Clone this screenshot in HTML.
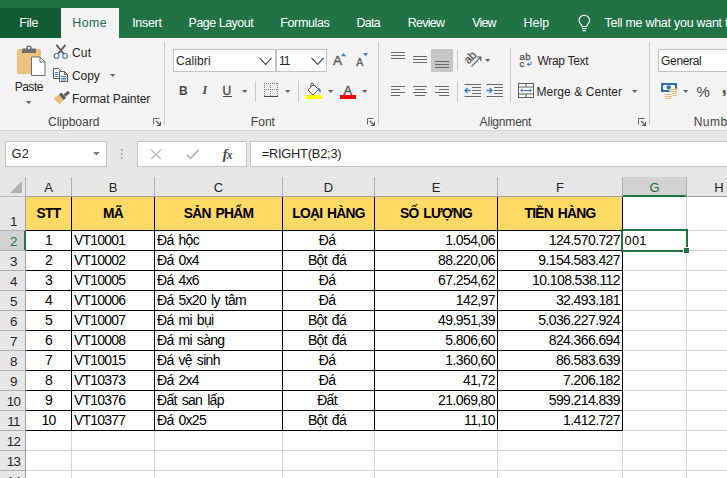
<!DOCTYPE html>
<html lang="vi"><head><meta charset="utf-8"><title>Excel</title>
<style>
html,body{margin:0;padding:0;}
body{width:727px;height:478px;overflow:hidden;position:relative;background:#e6e6e6;font-family:"Liberation Sans",sans-serif;font-size:12px;color:#262626;}
.a{position:absolute;white-space:nowrap;}
.tab{position:absolute;top:15px;color:#fff;font-size:12.5px;line-height:15px;white-space:nowrap;}
.rt{position:absolute;white-space:nowrap;font-size:12.5px;line-height:15px;color:#262626;}
.gl{position:absolute;white-space:nowrap;font-size:12px;line-height:15px;color:#444;}
.sep{position:absolute;width:1px;background:#c8c8c8;}
.ch{position:absolute;top:177px;height:19px;line-height:21px;text-align:center;font-size:13px;color:#262626;}
.rh{position:absolute;left:1px;width:25px;text-align:center;font-size:13.4px;color:#262626;line-height:16px;letter-spacing:-0.6px;}
.c{position:absolute;white-space:nowrap;font-size:14px;line-height:15px;color:#000;letter-spacing:-0.8px;}
.cn{letter-spacing:-0.6px;}
.ct{letter-spacing:-0.7px;word-spacing:1.8px;}
.hc{position:absolute;white-space:nowrap;font-size:13.8px;line-height:15px;color:#000;font-weight:bold;text-align:center;letter-spacing:-0.7px;word-spacing:1.5px;}
.vl{position:absolute;width:1px;}
.hl{position:absolute;height:1px;}
svg{position:absolute;overflow:visible;}
</style></head><body>

<div class="a" style="left:0;top:0;width:727px;height:38px;background:#217346"></div>
<div class="a" style="left:0;top:8px;width:61px;height:30px;background:#115c33"></div>
<div class="a" style="left:61px;top:8px;width:58px;height:30px;background:#f3f3f3"></div>
<div class="a" style="left:19.21px;top:16.50px;font-size:12.4px;line-height:12.4px;letter-spacing:-0.23px;color:#fff;">File</div>
<div class="a" style="left:72.31px;top:16.50px;font-size:12.4px;line-height:12.4px;letter-spacing:0.4px;color:#217346;">Home</div>
<div class="a" style="left:132.18px;top:16.50px;font-size:12.4px;line-height:12.4px;letter-spacing:-0.25px;color:#fff;">Insert</div>
<div class="a" style="left:188.61px;top:16.50px;font-size:12.4px;line-height:12.4px;letter-spacing:-0.45px;color:#fff;">Page Layout</div>
<div class="a" style="left:280.31px;top:16.50px;font-size:12.4px;line-height:12.4px;letter-spacing:-0.32px;color:#fff;">Formulas</div>
<div class="a" style="left:356.51px;top:16.50px;font-size:12.4px;line-height:12.4px;letter-spacing:-0.67px;color:#fff;">Data</div>
<div class="a" style="left:407.71px;top:16.50px;font-size:12.4px;line-height:12.4px;letter-spacing:-0.7px;color:#fff;">Review</div>
<div class="a" style="left:472.2px;top:16.50px;font-size:12.4px;line-height:12.4px;letter-spacing:-0.76px;color:#fff;">View</div>
<div class="a" style="left:523.61px;top:16.50px;font-size:12.4px;line-height:12.4px;letter-spacing:0.05px;color:#fff;">Help</div>
<div class="a" style="left:604.55px;top:16.50px;font-size:12.4px;line-height:12.4px;letter-spacing:-0.22px;color:#fff;">Tell me what you want to do</div>
<svg style="left:578px;top:15px" width="13" height="17" viewBox="0 0 13 17"><path d="M4 11.5C4 9.5 1 8.5 1 5.5A5.3 5.3 0 0 1 11.6 5.5C11.6 8.5 8.6 9.5 8.6 11.5Z" fill="none" stroke="#fff" stroke-width="1.1"/><path d="M4 13.5H8.6M4.6 15.6H8" stroke="#fff" stroke-width="1.1" fill="none"/></svg>
<div class="a" style="left:0;top:38px;width:727px;height:92px;background:#f3f3f3"></div>
<div class="a" style="left:0;top:130px;width:727px;height:1px;background:#d6d6d6"></div>
<div class="a" style="left:14.64px;top:81.04px;font-size:12px;line-height:12px;letter-spacing:-0.47px;color:#262626;">Paste</div>
<svg style="left:26px;top:101px" width="6" height="4" viewBox="0 0 6 4"><path d="M0 0H5.4L2.7 3Z" fill="#666"/></svg>
<div class="a" style="left:71.9px;top:47.14px;font-size:12px;line-height:12px;letter-spacing:0.25px;color:#262626;">Cut</div>
<div class="a" style="left:71.9px;top:69.74px;font-size:12px;line-height:12px;letter-spacing:-0.02px;color:#262626;">Copy</div>
<svg style="left:110px;top:74px" width="6" height="4" viewBox="0 0 6 4"><path d="M0 0H5.4L2.7 3Z" fill="#666"/></svg>
<div class="a" style="left:71.94px;top:92.54px;font-size:12px;line-height:12px;letter-spacing:-0.08px;color:#262626;">Format Painter</div>
<div class="a" style="left:48.0px;top:115.84px;font-size:12px;line-height:12px;letter-spacing:-0.0px;color:#444;">Clipboard</div>
<svg style="left:153px;top:118px" width="8" height="8" viewBox="0 0 8 8"><path d="M0.5 6.5V0.5H6.5" fill="none" stroke="#666" stroke-width="1"/><path d="M3 3L7 7" stroke="#555" stroke-width="1.1" fill="none"/><path d="M7.5 4V7.5H4" fill="none" stroke="#555" stroke-width="1"/></svg>
<div class="a" style="left:250.84px;top:115.84px;font-size:12px;line-height:12px;letter-spacing:0.03px;color:#444;">Font</div>
<svg style="left:367px;top:118px" width="8" height="8" viewBox="0 0 8 8"><path d="M0.5 6.5V0.5H6.5" fill="none" stroke="#666" stroke-width="1"/><path d="M3 3L7 7" stroke="#555" stroke-width="1.1" fill="none"/><path d="M7.5 4V7.5H4" fill="none" stroke="#555" stroke-width="1"/></svg>
<div class="a" style="left:479.6px;top:115.84px;font-size:12px;line-height:12px;letter-spacing:-0.19px;color:#444;">Alignment</div>
<svg style="left:638px;top:118px" width="8" height="8" viewBox="0 0 8 8"><path d="M0.5 6.5V0.5H6.5" fill="none" stroke="#666" stroke-width="1"/><path d="M3 3L7 7" stroke="#555" stroke-width="1.1" fill="none"/><path d="M7.5 4V7.5H4" fill="none" stroke="#555" stroke-width="1"/></svg>
<div class="a" style="left:693.64px;top:115.84px;font-size:12px;line-height:12px;letter-spacing:0.5px;color:#444;">Number</div>
<div class="sep" style="left:164px;top:42px;height:83px"></div>
<div class="sep" style="left:378px;top:42px;height:83px"></div>
<div class="sep" style="left:649px;top:42px;height:83px"></div>
<div class="sep" style="left:255px;top:81px;height:21px"></div>
<div class="sep" style="left:298px;top:81px;height:21px"></div>
<div class="sep" style="left:457px;top:50px;height:21px"></div>
<div class="sep" style="left:457px;top:81px;height:21px"></div>
<div class="sep" style="left:510px;top:48px;height:55px"></div>
<svg style="left:16px;top:45px" width="31" height="32" viewBox="0 0 31 32">
<rect x="1" y="4" width="24" height="25" rx="2" fill="#ecc27e"/>
<path d="M6 8V4.5Q6 3.5 7 3.5H10.5V2Q10.5 0.8 11.7 0.8H14.3Q15.5 0.8 15.5 2V3.5H19Q20 3.5 20 4.5V8Z" fill="#6e6e6e"/>
<rect x="12" y="2" width="2" height="2" fill="#f3f3f3"/>
<path d="M15.5 12H24L29 17V30.5H15.5Z" fill="#fff" stroke="#6e6e6e" stroke-width="1"/>
<path d="M24 12V17H29" fill="none" stroke="#6e6e6e" stroke-width="1"/>
</svg>
<svg style="left:53px;top:44px" width="16" height="16" viewBox="0 0 16 16">
<path d="M3.4 0.8L10.8 10M12.4 0.8L5 10" stroke="#606060" stroke-width="1.9" fill="none"/>
<circle cx="3.6" cy="11.9" r="2.4" fill="#f3f3f3" stroke="#3c7ac6" stroke-width="1.1"/>
<circle cx="12.1" cy="11.9" r="2.4" fill="#f3f3f3" stroke="#3c7ac6" stroke-width="1.1"/>
</svg>
<svg style="left:52px;top:67px" width="17" height="16" viewBox="0 0 17 16">
<path d="M1.5 1.5H6.5L9.5 4.5V11.5H1.5Z" fill="#fff" stroke="#5c5c5c" stroke-width="1"/>
<path d="M3 5.5H6M3 7.5H6M3 9.5H6" stroke="#3c7ac6" stroke-width="1"/>
<path d="M7.5 4.5H12.5L15.5 7.5V14.5H7.5Z" fill="#fff" stroke="#5c5c5c" stroke-width="1"/>
<path d="M12.5 4.5V7.5H15.5" fill="none" stroke="#5c5c5c" stroke-width="1"/>
<path d="M9 9.5H14M9 11.5H14M9 13H14" stroke="#3c7ac6" stroke-width="1"/>
</svg>
<svg style="left:53px;top:90px" width="18" height="15" viewBox="0 0 18 15">
<path d="M0.5 8.5L6 4.5L10.5 10L6.5 14.5Z" fill="#ecbd75"/>
<path d="M6 4.5L8.5 2.5L13 8L10.5 10Z" fill="#5c5c5c"/>
<path d="M10.5 4.5L15 0.8L17 3L12.5 6.8Z" fill="#5c5c5c"/>
</svg>
<div class="a" style="left:173px;top:49px;width:103px;height:23px;background:#fff;border:1px solid #c3c3c3;box-sizing:border-box"></div>
<div class="a" style="left:276px;top:49px;width:51px;height:23px;background:#fff;border:1px solid #c3c3c3;box-sizing:border-box"></div>
<div class="a" style="left:175.9px;top:54.74px;font-size:12px;line-height:12px;letter-spacing:0.11px;color:#262626;">Calibri</div>
<div class="a" style="left:278.96px;top:54.74px;font-size:12px;line-height:12px;letter-spacing:-1.04px;color:#262626;">11</div>
<svg style="left:259.4px;top:57px" width="14" height="9" viewBox="0 0 14 9"><path d="M0.5 0.8L6.6 7.4L12.7 0.8" fill="none" stroke="#444" stroke-width="1.1"/></svg>
<svg style="left:310.5px;top:57px" width="14" height="9" viewBox="0 0 14 9"><path d="M0.5 0.8L6.6 7.4L12.7 0.8" fill="none" stroke="#444" stroke-width="1.1"/></svg>
<div class="a" style="left:333.1px;top:54.37px;font-size:13.5px;line-height:13.5px;letter-spacing:0px;color:#5a5a5a;-webkit-text-stroke:0.35px #5a5a5a">A</div>
<svg style="left:341px;top:52.5px" width="6" height="4" viewBox="0 0 6 4"><path d="M0 3.2H5L2.5 0Z" fill="#3c7ac6"/></svg>
<div class="a" style="left:356.3px;top:56.91px;font-size:10.5px;line-height:10.5px;letter-spacing:0px;color:#5a5a5a;-webkit-text-stroke:0.3px #5a5a5a">A</div>
<svg style="left:363px;top:52.5px" width="6" height="4" viewBox="0 0 6 4"><path d="M0 0H5L2.5 3.2Z" fill="#3c7ac6"/></svg>
<div class="a" style="left:178.98px;top:84.64px;font-size:12px;line-height:12px;letter-spacing:0px;color:#4a4a4a;font-weight:bold">B</div>
<div class="a" style="left:202.2px;top:83.4px;font-size:13px;line-height:14px;color:#4a4a4a;font-family:'Liberation Serif',serif;font-style:italic;font-weight:bold">I</div>
<div class="a" style="left:222.56px;top:84.54px;font-size:12px;line-height:12px;letter-spacing:0px;color:#4a4a4a;-webkit-text-stroke:0.35px #4a4a4a">U</div>
<div class="a" style="left:223px;top:96px;width:9px;height:1px;background:#4a4a4a"></div>
<svg style="left:242px;top:90px" width="6" height="4" viewBox="0 0 6 4"><path d="M0 0H5.4L2.7 3Z" fill="#666"/></svg>
<svg style="left:264px;top:83px" width="14" height="14" viewBox="0 0 14 14">
<path d="M0 0.5H14M0 6.5H14" stroke="#7a7a7a" stroke-width="1" stroke-dasharray="1 1" fill="none"/>
<path d="M0.5 0V13M6.5 0V13M13.5 0V13" stroke="#7a7a7a" stroke-width="1" stroke-dasharray="1 1" fill="none"/>
<path d="M0 13.5H14" stroke="#444" stroke-width="1"/>
</svg>
<svg style="left:285px;top:90px" width="6" height="4" viewBox="0 0 6 4"><path d="M0 0H5.4L2.7 3Z" fill="#666"/></svg>
<svg style="left:305px;top:82px" width="18" height="17" viewBox="0 0 18 17">
<path d="M3 8L8.5 2.5L13.5 7.5L8 13Z" fill="#fff" stroke="#555" stroke-width="1"/>
<path d="M6 5V2.2Q6 1 7.2 1Q8.4 1 8.4 2.2V4" fill="none" stroke="#555" stroke-width="1"/>
<path d="M13.5 5.5Q16.5 7 15.5 11Q14 9 13 8.5Z" fill="#3c7ac6"/>
<rect x="0.8" y="13" width="16.4" height="4" fill="#ffff00"/>
</svg>
<svg style="left:328px;top:90px" width="6" height="4" viewBox="0 0 6 4"><path d="M0 0H5.4L2.7 3Z" fill="#666"/></svg>
<div class="a" style="left:343.5px;top:83.60px;font-size:13px;line-height:13px;letter-spacing:0px;color:#5a5a5a;-webkit-text-stroke:0.45px #5a5a5a">A</div>
<div class="a" style="left:340px;top:95px;width:16px;height:4px;background:#ff0000"></div>
<svg style="left:362px;top:90px" width="6" height="4" viewBox="0 0 6 4"><path d="M0 0H5.4L2.7 3Z" fill="#666"/></svg>
<div class="a" style="left:431px;top:49px;width:22px;height:23px;background:#c6c6c6"></div>
<svg style="left:0;top:0" width="1" height="1"><path d="M391 52.5H405M391 55.5H405M391 58.5H405" stroke="#6a6a6a" stroke-width="1" fill="none"/></svg>
<svg style="left:0;top:0" width="1" height="1"><path d="M413 56.5H427M413 59.5H427M413 62.5H427" stroke="#6a6a6a" stroke-width="1" fill="none"/></svg>
<svg style="left:0;top:0" width="1" height="1"><path d="M435 61.5H449M435 64.5H449M435 67.5H449" stroke="#6a6a6a" stroke-width="1" fill="none"/></svg>
<svg style="left:0;top:0" width="1" height="1"><path d="M391 86.5H405M391 89.5H400M391 92.5H405M391 95.5H400" stroke="#6a6a6a" stroke-width="1" fill="none"/></svg>
<svg style="left:0;top:0" width="1" height="1"><path d="M413.0 86.5H427.0M415.0 89.5H425.0M413.0 92.5H427.0M415.0 95.5H425.0" stroke="#6a6a6a" stroke-width="1" fill="none"/></svg>
<svg style="left:0;top:0" width="1" height="1"><path d="M435 86.5H449M439 89.5H449M435 92.5H449M439 95.5H449" stroke="#6a6a6a" stroke-width="1" fill="none"/></svg>
<svg style="left:463px;top:50px" width="20" height="18" viewBox="0 0 20 18">
<text transform="translate(5.5 14.4) rotate(-45)" font-family="Liberation Sans, sans-serif" font-size="11.5" fill="#555" stroke="#555" stroke-width="0.25" letter-spacing="-0.4">ab</text>
<path d="M8.6 16.4L17.6 7.2" stroke="#555" stroke-width="1.1" fill="none"/>
<path d="M13.6 7H17.8V11.2" stroke="#555" stroke-width="1.1" fill="none"/>
</svg>
<svg style="left:485px;top:59px" width="6" height="4" viewBox="0 0 6 4"><path d="M0 0H5.4L2.7 3Z" fill="#666"/></svg>
<svg style="left:464px;top:83px" width="18" height="15" viewBox="0 0 18 15">
<path d="M0.5 1.5H17M8 4.5H17M8 7.5H17M8 10.5H17M0.5 13.5H17" stroke="#6a6a6a" stroke-width="1" fill="none"/>
<path d="M1 7.5H6.5M3.5 5L1 7.5L3.5 10" stroke="#3c7ac6" stroke-width="1.4" fill="none"/>
</svg>
<svg style="left:486px;top:83px" width="18" height="15" viewBox="0 0 18 15">
<path d="M0.5 1.5H17M8 4.5H17M8 7.5H17M8 10.5H17M0.5 13.5H17" stroke="#6a6a6a" stroke-width="1" fill="none"/>
<path d="M0.5 7.5H6M3.5 5L6 7.5L3.5 10" stroke="#3c7ac6" stroke-width="1.4" fill="none"/>
</svg>
<svg style="left:519px;top:52px" width="14" height="16" viewBox="0 0 14 16">
<text x="0.6" y="7.8" font-family="Liberation Sans, sans-serif" font-size="9.6" fill="#555" stroke="#555" stroke-width="0.3" letter-spacing="0.2">ab</text>
<text x="0.6" y="14.6" font-family="Liberation Sans, sans-serif" font-size="9.6" fill="#555" stroke="#555" stroke-width="0.3">c</text>
<path d="M12 9.5V12.4H8.5M10 10.8L8.3 12.4L10 14" stroke="#3c7ac6" stroke-width="1" fill="none"/>
</svg>
<div class="a" style="left:537.4px;top:54.64px;font-size:12px;line-height:12px;letter-spacing:-0.29px;color:#262626;">Wrap Text</div>
<svg style="left:518px;top:83px" width="16" height="15" viewBox="0 0 16 15">
<rect x="0.5" y="0.5" width="15" height="14" fill="#fff" stroke="#5c5c5c" stroke-width="1"/>
<path d="M0.5 4H15.5M0.5 11H15.5M8 0.5V4M8 11V14.5" stroke="#5c5c5c" stroke-width="1" fill="none"/>
<path d="M2.5 7.5H13.5M4.5 5.8L2.5 7.5L4.5 9.2M11.5 5.8L13.5 7.5L11.5 9.2" stroke="#3c7ac6" stroke-width="1" fill="none"/>
</svg>
<div class="a" style="left:536.44px;top:85.54px;font-size:12px;line-height:12px;letter-spacing:0.07px;color:#262626;">Merge &amp; Center</div>
<svg style="left:631.5px;top:89.5px" width="6" height="4" viewBox="0 0 6 4"><path d="M0 0H5.4L2.7 3Z" fill="#666"/></svg>
<div class="a" style="left:658px;top:49px;width:80px;height:23px;background:#fff;border:1px solid #c3c3c3;box-sizing:border-box"></div>
<div class="a" style="left:661.1px;top:54.74px;font-size:12px;line-height:12px;letter-spacing:-0.35px;color:#262626;">General</div>
<svg style="left:660px;top:82px" width="18" height="18" viewBox="0 0 18 18">
<rect x="1" y="1" width="16" height="9" fill="#2f6eb5"/>
<path d="M4 3H14L15 4V7L14 8H4L3 7V4Z" fill="#fff"/>
<circle cx="8.8" cy="5.4" r="2.2" fill="#2f6eb5"/>
<rect x="9.5" y="6.6" width="8" height="4" fill="#f3f3f3"/>
<path d="M10 7.5H17M10 9.5H17M12.6 11.5H17M13 13.5H16.6" stroke="#e8b668" stroke-width="1.15" fill="none"/>
<path d="M5 12.5H11.8M5 14.5H11.8M5.6 16.5H11.2" stroke="#e8b668" stroke-width="1.15" fill="none"/>
</svg>
<svg style="left:683px;top:90px" width="6" height="4" viewBox="0 0 6 4"><path d="M0 0H5.4L2.7 3Z" fill="#666"/></svg>
<div class="a" style="left:696.45px;top:83.60px;font-size:15px;line-height:15px;letter-spacing:0px;color:#4a4a4a;">%</div>
<div class="a" style="left:721.5px;top:75.5px;font-size:19px;line-height:22px;font-weight:bold;color:#4a4a4a">,</div>
<div class="a" style="left:5px;top:141px;width:102px;height:26px;background:#fff;border:1px solid #c3c3c3;box-sizing:border-box"></div>
<div class="a" style="left:137px;top:141px;width:110px;height:26px;background:#fff;border:1px solid #c3c3c3;box-sizing:border-box"></div>
<div class="a" style="left:250px;top:141px;width:480px;height:26px;background:#fff;border:1px solid #c3c3c3;box-sizing:border-box"></div>
<div class="a" style="left:11.56px;top:147.96px;font-size:12.8px;line-height:12.8px;letter-spacing:0.23px;color:#262626;">G2</div>
<div class="a" style="left:261.66px;top:147.76px;font-size:12.8px;line-height:12.8px;letter-spacing:-0.2px;color:#262626;">=RIGHT(B2;3)</div>
<svg style="left:93px;top:151.5px" width="7" height="4" viewBox="0 0 7 4"><path d="M0 0H6.8L3.4 3.6Z" fill="#777"/></svg>
<svg style="left:120px;top:148px" width="4" height="12" viewBox="0 0 4 12"><path d="M0.8 1H2.6V2.8H0.8ZM0.8 5H2.6V6.8H0.8ZM0.8 9H2.6V10.8H0.8Z" fill="#a6a6a6"/></svg>
<svg style="left:150px;top:149px" width="12" height="11" viewBox="0 0 12 11"><path d="M1 0.8L11 10M11 0.8L1 10" stroke="#b9b9b9" stroke-width="1.4" fill="none"/></svg>
<svg style="left:186px;top:149px" width="14" height="11" viewBox="0 0 14 11"><path d="M0.8 5.6L4.6 9.4L12.6 1" stroke="#b9b9b9" stroke-width="2" fill="none"/></svg>
<div class="a" style="left:222.8px;top:145.6px;font-size:14px;line-height:18px;color:#444;font-family:'Liberation Serif',serif;font-style:italic;font-weight:bold;letter-spacing:-0.6px">f<span style="font-size:11.5px">x</span></div>
<div class="a" style="left:26px;top:197px;width:701px;height:281px;background:#fff"></div>
<div class="a" style="left:26px;top:197px;width:596px;height:33px;background:#ffd966"></div>
<div class="a" style="left:623px;top:177px;width:63px;height:19px;background:#d2d2d2"></div>
<div class="vl" style="left:25px;top:177px;height:19px;background:#b0b0b0"></div>
<div class="vl" style="left:71px;top:177px;height:19px;background:#b0b0b0"></div>
<div class="vl" style="left:154px;top:177px;height:19px;background:#b0b0b0"></div>
<div class="vl" style="left:282px;top:177px;height:19px;background:#b0b0b0"></div>
<div class="vl" style="left:374px;top:177px;height:19px;background:#b0b0b0"></div>
<div class="vl" style="left:497px;top:177px;height:19px;background:#b0b0b0"></div>
<div class="vl" style="left:622px;top:177px;height:19px;background:#b0b0b0"></div>
<div class="vl" style="left:686px;top:177px;height:19px;background:#b0b0b0"></div>
<div class="hl" style="left:0;top:196px;width:727px;background:#9f9f9f"></div>
<div class="hl" style="left:0;top:196px;width:25px;background:#bcbcbc"></div>
<div class="vl" style="left:25px;top:197px;height:281px;background:#9f9f9f"></div>
<div class="hl" style="left:0;top:230px;width:25px;background:#b0b0b0"></div>
<div class="hl" style="left:26px;top:230px;width:701px;background:#d4d4d4"></div>
<div class="hl" style="left:0;top:250px;width:25px;background:#b0b0b0"></div>
<div class="hl" style="left:26px;top:250px;width:701px;background:#d4d4d4"></div>
<div class="hl" style="left:0;top:270px;width:25px;background:#b0b0b0"></div>
<div class="hl" style="left:26px;top:270px;width:701px;background:#d4d4d4"></div>
<div class="hl" style="left:0;top:290px;width:25px;background:#b0b0b0"></div>
<div class="hl" style="left:26px;top:290px;width:701px;background:#d4d4d4"></div>
<div class="hl" style="left:0;top:310px;width:25px;background:#b0b0b0"></div>
<div class="hl" style="left:26px;top:310px;width:701px;background:#d4d4d4"></div>
<div class="hl" style="left:0;top:330px;width:25px;background:#b0b0b0"></div>
<div class="hl" style="left:26px;top:330px;width:701px;background:#d4d4d4"></div>
<div class="hl" style="left:0;top:350px;width:25px;background:#b0b0b0"></div>
<div class="hl" style="left:26px;top:350px;width:701px;background:#d4d4d4"></div>
<div class="hl" style="left:0;top:370px;width:25px;background:#b0b0b0"></div>
<div class="hl" style="left:26px;top:370px;width:701px;background:#d4d4d4"></div>
<div class="hl" style="left:0;top:390px;width:25px;background:#b0b0b0"></div>
<div class="hl" style="left:26px;top:390px;width:701px;background:#d4d4d4"></div>
<div class="hl" style="left:0;top:410px;width:25px;background:#b0b0b0"></div>
<div class="hl" style="left:26px;top:410px;width:701px;background:#d4d4d4"></div>
<div class="hl" style="left:0;top:430px;width:25px;background:#b0b0b0"></div>
<div class="hl" style="left:26px;top:430px;width:701px;background:#d4d4d4"></div>
<div class="hl" style="left:0;top:450px;width:25px;background:#b0b0b0"></div>
<div class="hl" style="left:26px;top:450px;width:701px;background:#d4d4d4"></div>
<div class="hl" style="left:0;top:470px;width:25px;background:#b0b0b0"></div>
<div class="hl" style="left:26px;top:470px;width:701px;background:#d4d4d4"></div>
<div class="hl" style="left:0;top:490px;width:25px;background:#b0b0b0"></div>
<div class="hl" style="left:26px;top:490px;width:701px;background:#d4d4d4"></div>
<div class="vl" style="left:71px;top:197px;height:281px;background:#d4d4d4"></div>
<div class="vl" style="left:154px;top:197px;height:281px;background:#d4d4d4"></div>
<div class="vl" style="left:282px;top:197px;height:281px;background:#d4d4d4"></div>
<div class="vl" style="left:374px;top:197px;height:281px;background:#d4d4d4"></div>
<div class="vl" style="left:497px;top:197px;height:281px;background:#d4d4d4"></div>
<div class="vl" style="left:622px;top:197px;height:281px;background:#d4d4d4"></div>
<div class="vl" style="left:686px;top:197px;height:281px;background:#d4d4d4"></div>
<div class="vl" style="left:71px;top:197px;height:234px;background:#000"></div>
<div class="vl" style="left:154px;top:197px;height:234px;background:#000"></div>
<div class="vl" style="left:282px;top:197px;height:234px;background:#000"></div>
<div class="vl" style="left:374px;top:197px;height:234px;background:#000"></div>
<div class="vl" style="left:497px;top:197px;height:234px;background:#000"></div>
<div class="vl" style="left:622px;top:197px;height:234px;background:#000"></div>
<div class="hl" style="left:26px;top:230px;width:597px;background:#000"></div>
<div class="hl" style="left:26px;top:250px;width:597px;background:#000"></div>
<div class="hl" style="left:26px;top:270px;width:597px;background:#000"></div>
<div class="hl" style="left:26px;top:290px;width:597px;background:#000"></div>
<div class="hl" style="left:26px;top:310px;width:597px;background:#000"></div>
<div class="hl" style="left:26px;top:330px;width:597px;background:#000"></div>
<div class="hl" style="left:26px;top:350px;width:597px;background:#000"></div>
<div class="hl" style="left:26px;top:370px;width:597px;background:#000"></div>
<div class="hl" style="left:26px;top:390px;width:597px;background:#000"></div>
<div class="hl" style="left:26px;top:410px;width:597px;background:#000"></div>
<div class="hl" style="left:26px;top:430px;width:597px;background:#000"></div>
<svg style="left:10px;top:181px" width="13" height="12" viewBox="0 0 13 12"><path d="M12 0V12H0Z" fill="#b2b2b2"/></svg>
<div class="ch" style="left:26px;width:45px;color:#262626">A</div>
<div class="ch" style="left:72px;width:82px;color:#262626">B</div>
<div class="ch" style="left:155px;width:127px;color:#262626">C</div>
<div class="ch" style="left:283px;width:91px;color:#262626">D</div>
<div class="ch" style="left:375px;width:122px;color:#262626">E</div>
<div class="ch" style="left:498px;width:124px;color:#262626">F</div>
<div class="ch" style="left:623px;width:63px;color:#217346">G</div>
<div class="ch" style="left:687px;width:64px;color:#262626">H</div>
<div class="rh" style="top:213.5px">1</div>
<div class="rh" style="top:233.5px;color:#217346">2</div>
<div class="rh" style="top:253.5px;color:#262626">3</div>
<div class="rh" style="top:273.5px;color:#262626">4</div>
<div class="rh" style="top:293.5px;color:#262626">5</div>
<div class="rh" style="top:313.5px;color:#262626">6</div>
<div class="rh" style="top:333.5px;color:#262626">7</div>
<div class="rh" style="top:353.5px;color:#262626">8</div>
<div class="rh" style="top:373.5px;color:#262626">9</div>
<div class="rh" style="top:393.5px;color:#262626">10</div>
<div class="rh" style="top:413.5px;color:#262626">11</div>
<div class="rh" style="top:433.5px;color:#262626">12</div>
<div class="rh" style="top:453.5px;color:#262626">13</div>
<div class="rh" style="top:473.5px;color:#262626">14</div>
<div class="a" style="left:0;top:231px;width:25px;height:19px;background:#d2d2d2"></div>
<div class="rh" style="top:233.5px;color:#217346">2</div>
<div class="a" style="left:24px;top:231px;width:2px;height:19px;background:#217346"></div>
<div class="hc" style="left:26px;width:45px;top:206px">STT</div>
<div class="hc" style="left:72px;width:82px;top:206px">MÃ</div>
<div class="hc" style="left:155px;width:127px;top:206px">SẢN PHẨM</div>
<div class="hc" style="left:283px;width:91px;top:206px">LOẠI HÀNG</div>
<div class="hc" style="left:375px;width:122px;top:206px">SỐ LƯỢNG</div>
<div class="hc" style="left:498px;width:124px;top:206px">TIỀN HÀNG</div>
<div class="c" style="left:26px;width:45px;top:233px;text-align:center">1</div>
<div class="c" style="left:74px;top:233px">VT10001</div>
<div class="c ct" style="left:157px;top:233px">Đá hộc</div>
<div class="c ct" style="left:281.5px;width:91px;top:233px;text-align:center">Đá</div>
<div class="c cn" style="left:375px;width:120px;top:233px;text-align:right">1.054,06</div>
<div class="c cn" style="left:498px;width:122px;top:233px;text-align:right">124.570.727</div>
<div class="c" style="left:26px;width:45px;top:253px;text-align:center">2</div>
<div class="c" style="left:74px;top:253px">VT10002</div>
<div class="c ct" style="left:157px;top:253px">Đá 0x4</div>
<div class="c ct" style="left:281.5px;width:91px;top:253px;text-align:center">Bột đá</div>
<div class="c cn" style="left:375px;width:120px;top:253px;text-align:right">88.220,06</div>
<div class="c cn" style="left:498px;width:122px;top:253px;text-align:right">9.154.583.427</div>
<div class="c" style="left:26px;width:45px;top:273px;text-align:center">3</div>
<div class="c" style="left:74px;top:273px">VT10005</div>
<div class="c ct" style="left:157px;top:273px">Đá 4x6</div>
<div class="c ct" style="left:281.5px;width:91px;top:273px;text-align:center">Đá</div>
<div class="c cn" style="left:375px;width:120px;top:273px;text-align:right">67.254,62</div>
<div class="c cn" style="left:498px;width:122px;top:273px;text-align:right">10.108.538.112</div>
<div class="c" style="left:26px;width:45px;top:293px;text-align:center">4</div>
<div class="c" style="left:74px;top:293px">VT10006</div>
<div class="c ct" style="left:157px;top:293px">Đá 5x20 ly tâm</div>
<div class="c ct" style="left:281.5px;width:91px;top:293px;text-align:center">Đá</div>
<div class="c cn" style="left:375px;width:120px;top:293px;text-align:right">142,97</div>
<div class="c cn" style="left:498px;width:122px;top:293px;text-align:right">32.493.181</div>
<div class="c" style="left:26px;width:45px;top:313px;text-align:center">5</div>
<div class="c" style="left:74px;top:313px">VT10007</div>
<div class="c ct" style="left:157px;top:313px">Đá mi bụi</div>
<div class="c ct" style="left:281.5px;width:91px;top:313px;text-align:center">Bột đá</div>
<div class="c cn" style="left:375px;width:120px;top:313px;text-align:right">49.951,39</div>
<div class="c cn" style="left:498px;width:122px;top:313px;text-align:right">5.036.227.924</div>
<div class="c" style="left:26px;width:45px;top:333px;text-align:center">6</div>
<div class="c" style="left:74px;top:333px">VT10008</div>
<div class="c ct" style="left:157px;top:333px">Đá mi sàng</div>
<div class="c ct" style="left:281.5px;width:91px;top:333px;text-align:center">Bột đá</div>
<div class="c cn" style="left:375px;width:120px;top:333px;text-align:right">5.806,60</div>
<div class="c cn" style="left:498px;width:122px;top:333px;text-align:right">824.366.694</div>
<div class="c" style="left:26px;width:45px;top:353px;text-align:center">7</div>
<div class="c" style="left:74px;top:353px">VT10015</div>
<div class="c ct" style="left:157px;top:353px">Đá vệ sinh</div>
<div class="c ct" style="left:281.5px;width:91px;top:353px;text-align:center">Đá</div>
<div class="c cn" style="left:375px;width:120px;top:353px;text-align:right">1.360,60</div>
<div class="c cn" style="left:498px;width:122px;top:353px;text-align:right">86.583.639</div>
<div class="c" style="left:26px;width:45px;top:373px;text-align:center">8</div>
<div class="c" style="left:74px;top:373px">VT10373</div>
<div class="c ct" style="left:157px;top:373px">Đá 2x4</div>
<div class="c ct" style="left:281.5px;width:91px;top:373px;text-align:center">Đá</div>
<div class="c cn" style="left:375px;width:120px;top:373px;text-align:right">41,72</div>
<div class="c cn" style="left:498px;width:122px;top:373px;text-align:right">7.206.182</div>
<div class="c" style="left:26px;width:45px;top:393px;text-align:center">9</div>
<div class="c" style="left:74px;top:393px">VT10376</div>
<div class="c ct" style="left:157px;top:393px">Đất san lấp</div>
<div class="c ct" style="left:281.5px;width:91px;top:393px;text-align:center">Đất</div>
<div class="c cn" style="left:375px;width:120px;top:393px;text-align:right">21.069,80</div>
<div class="c cn" style="left:498px;width:122px;top:393px;text-align:right">599.214.839</div>
<div class="c" style="left:26px;width:45px;top:413px;text-align:center">10</div>
<div class="c" style="left:74px;top:413px">VT10377</div>
<div class="c ct" style="left:157px;top:413px">Đá 0x25</div>
<div class="c ct" style="left:281.5px;width:91px;top:413px;text-align:center">Bột đá</div>
<div class="c cn" style="left:375px;width:120px;top:413px;text-align:right">11,10</div>
<div class="c cn" style="left:498px;width:122px;top:413px;text-align:right">1.412.727</div>
<div class="a" style="left:621px;top:229px;width:63px;height:19px;border:2px solid #217346"></div>
<div class="a" style="left:683px;top:247px;width:5px;height:5px;background:#217346;border:1px solid #fff"></div>
<div class="a" style="left:623px;top:195px;width:63px;height:2px;background:#217346"></div>
<div class="a" style="left:624.49px;top:235.06px;font-size:12.8px;line-height:12.8px;letter-spacing:0.29px;color:#000;">001</div>
</body></html>
